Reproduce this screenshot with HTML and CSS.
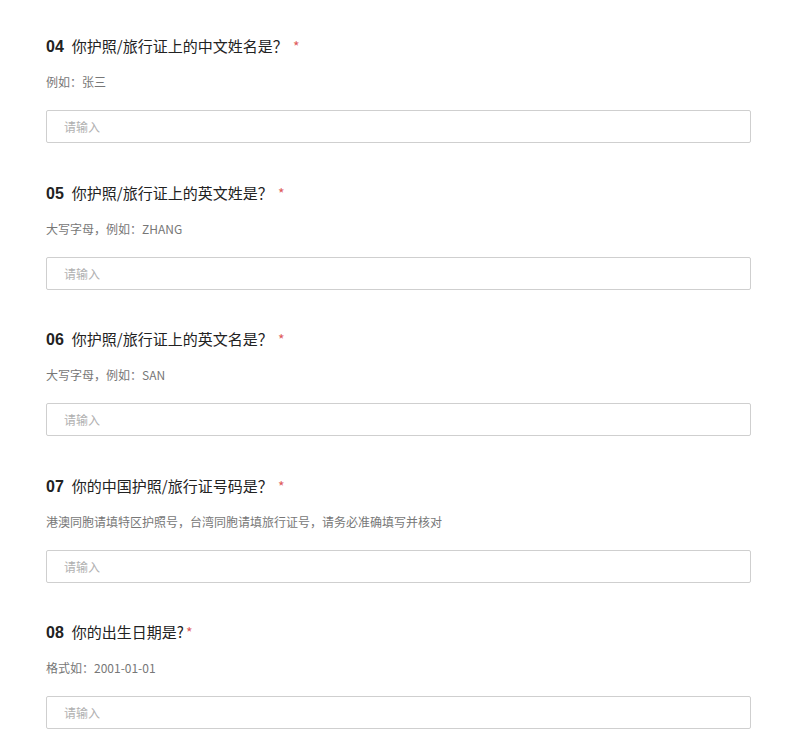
FILE: index.html
```html
<!DOCTYPE html>
<html lang="zh">
<head>
<meta charset="utf-8">
<link rel="stylesheet" href="styles.css">
</head>
<body>
<div class="form">
  <div class="q">
    <div class="title"><span class="num">04</span>你护照/旅行证上的中文姓名是？ <span class="req">*</span></div>
    <div class="hint">例如：张三</div>
    <input class="field" type="text" placeholder="请输入">
  </div>
  <div class="q">
    <div class="title"><span class="num">05</span>你护照/旅行证上的英文姓是？ <span class="req">*</span></div>
    <div class="hint">大写字母，例如：ZHANG</div>
    <input class="field" type="text" placeholder="请输入">
  </div>
  <div class="q">
    <div class="title"><span class="num">06</span>你护照/旅行证上的英文名是？ <span class="req">*</span></div>
    <div class="hint">大写字母，例如：SAN</div>
    <input class="field" type="text" placeholder="请输入">
  </div>
  <div class="q">
    <div class="title"><span class="num">07</span>你的中国护照/旅行证号码是？ <span class="req">*</span></div>
    <div class="hint">港澳同胞请填特区护照号，台湾同胞请填旅行证号，请务必准确填写并核对</div>
    <input class="field" type="text" placeholder="请输入">
  </div>
  <div class="q">
    <div class="title"><span class="num">08</span>你的出生日期是?<span class="req">*</span></div>
    <div class="hint">格式如：2001-01-01</div>
    <input class="field" type="text" placeholder="请输入">
  </div>
</div>
</body>
</html>
```

FILE: styles.css
```css
html, body {
  margin: 0;
  padding: 0;
  background: #ffffff;
}
body {
  font-family: "Noto Sans CJK SC", "Liberation Sans", sans-serif;
}
.form {
  width: 705px;
  padding-left: 46px;
  padding-top: 36px;
  display: flex;
  flex-direction: column;
  gap: 39.5px;
}
.q {
  display: flex;
  flex-direction: column;
}
.title {
  font-size: 15px;
  line-height: 20px;
  color: #222222;
}
.num {
  font-weight: 700;
  font-family: "Liberation Sans", sans-serif;
  font-size: 16px;
  margin-right: 8px;
}
.req {
  color: #de5b5b;
  font-size: 14px;
  margin-left: 2px;
}
.hint {
  margin-top: 17px;
  font-size: 12px;
  line-height: 16px;
  color: #777777;
}
.field {
  margin-top: 20px;
  box-sizing: border-box;
  width: 705px;
  height: 33px;
  border: 1px solid #cfcfcf;
  border-radius: 2px;
  padding: 0 17px;
  font-family: "Noto Sans CJK SC", sans-serif;
  font-size: 12px;
  color: #333;
  outline: none;
  background: #fff;
}
.field::placeholder {
  color: #b0b0b0;
}
```
